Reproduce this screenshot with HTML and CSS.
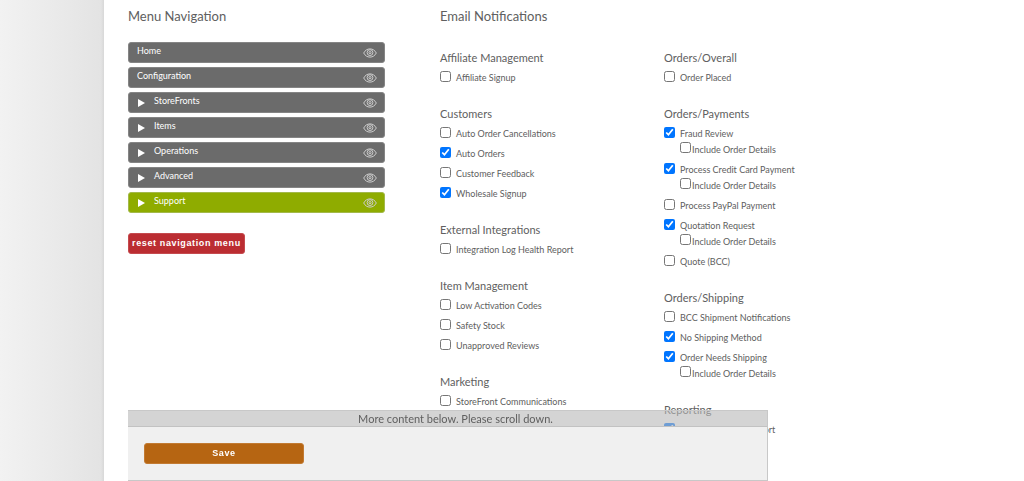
FILE: index.html
```html
<!DOCTYPE html>
<html lang="en">
<head>
<meta charset="utf-8">
<title>Email Notifications</title>
<link rel="stylesheet" href="styles.css">
</head>
<body>
<svg class="sprite" aria-hidden="true">
  <symbol id="eye" viewBox="0 0 14 10">
    <path d="M.7 5C2.2 2.2 4.3.9 7 .9S11.800 2.200 13.300 5C11.800 7.800 9.700 9.100 7 9.100S2.200 7.800.7 5Z"/>
    <circle cx="7" cy="4.600" r="2.900"/>
    <circle cx="7" cy="4.600" r="1.100"/>
  </symbol>
</svg>
<div class="page">
  <aside class="rail"></aside>
  <main class="content">
    <section class="menu">
      <h2 class="title">Menu Navigation</h2>
      <ul class="menu-list">
        <li class="item"><a class="link" href="#">Home</a><button class="eye" aria-label="Toggle Home"><svg><use href="#eye"/></svg></button></li>
        <li class="item"><a class="link" href="#">Configuration</a><button class="eye" aria-label="Toggle Configuration"><svg><use href="#eye"/></svg></button></li>
        <li class="item"><i class="arrow"></i><a class="link" href="#">StoreFronts</a><button class="eye" aria-label="Toggle StoreFronts"><svg><use href="#eye"/></svg></button></li>
        <li class="item"><i class="arrow"></i><a class="link" href="#">Items</a><button class="eye" aria-label="Toggle Items"><svg><use href="#eye"/></svg></button></li>
        <li class="item"><i class="arrow"></i><a class="link" href="#">Operations</a><button class="eye" aria-label="Toggle Operations"><svg><use href="#eye"/></svg></button></li>
        <li class="item"><i class="arrow"></i><a class="link" href="#">Advanced</a><button class="eye" aria-label="Toggle Advanced"><svg><use href="#eye"/></svg></button></li>
        <li class="item active"><i class="arrow"></i><a class="link" href="#">Support</a><button class="eye" aria-label="Toggle Support"><svg><use href="#eye"/></svg></button></li>
      </ul>
      <button class="btn reset">reset navigation menu</button>
    </section>
    <section class="notifications">
      <h2 class="title">Email Notifications</h2>
      <div class="columns">
        <div class="column">
          <div class="group">
            <h3 class="heading">Affiliate Management</h3>
            <label class="row"><input type="checkbox">Affiliate Signup</label>
          </div>
          <div class="group">
            <h3 class="heading">Customers</h3>
            <label class="row"><input type="checkbox">Auto Order Cancellations</label>
            <label class="row"><input type="checkbox" checked>Auto Orders</label>
            <label class="row"><input type="checkbox">Customer Feedback</label>
            <label class="row"><input type="checkbox" checked>Wholesale Signup</label>
          </div>
          <div class="group">
            <h3 class="heading">External Integrations</h3>
            <label class="row"><input type="checkbox">Integration Log Health Report</label>
          </div>
          <div class="group">
            <h3 class="heading">Item Management</h3>
            <label class="row"><input type="checkbox">Low Activation Codes</label>
            <label class="row"><input type="checkbox">Safety Stock</label>
            <label class="row"><input type="checkbox">Unapproved Reviews</label>
          </div>
          <div class="group">
            <h3 class="heading">Marketing</h3>
            <label class="row"><input type="checkbox">StoreFront Communications</label>
          </div>
        </div>
        <div class="column">
          <div class="group">
            <h3 class="heading">Orders/Overall</h3>
            <label class="row"><input type="checkbox">Order Placed</label>
          </div>
          <div class="group">
            <h3 class="heading">Orders/Payments</h3>
            <label class="row"><input type="checkbox" checked>Fraud Review</label>
            <label class="row sub"><input type="checkbox">Include Order Details</label>
            <label class="row"><input type="checkbox" checked>Process Credit Card Payment</label>
            <label class="row sub"><input type="checkbox">Include Order Details</label>
            <label class="row"><input type="checkbox">Process PayPal Payment</label>
            <label class="row"><input type="checkbox" checked>Quotation Request</label>
            <label class="row sub"><input type="checkbox">Include Order Details</label>
            <label class="row"><input type="checkbox">Quote (BCC)</label>
          </div>
          <div class="group">
            <h3 class="heading">Orders/Shipping</h3>
            <label class="row"><input type="checkbox">BCC Shipment Notifications</label>
            <label class="row"><input type="checkbox" checked>No Shipping Method</label>
            <label class="row"><input type="checkbox" checked>Order Needs Shipping</label>
            <label class="row sub"><input type="checkbox">Include Order Details</label>
          </div>
          <div class="group">
            <h3 class="heading">Reporting</h3>
            <label class="row"><input type="checkbox" checked>Orders Summary Report</label>
          </div>
        </div>
      </div>
    </section>
  </main>
</div>
<div class="savebar">
  <p class="more">More content below. Please scroll down.</p>
  <div class="actions"><button class="btn save">Save</button></div>
</div>
</body>
</html>
```
FILE: styles.css
```css
* { box-sizing: border-box; }
body { margin: 0; background: #fff; color: #606060; font-family: Lato, "Open Sans", sans-serif; font-size: 9px; }
h2, h3, p, ul { margin: 0; padding: 0; font-weight: 400; }
.sprite { display: none; }
.page { display: flex; min-height: 100vh; }
.rail { flex: none; width: 104px; background: linear-gradient(to right, transparent 101px, #d8d8d8), linear-gradient(to right, #f2f2f2, #e3e3e3); }
.content { flex: 1; display: flex; gap: 55px; padding: 6px 24px 0; }
.menu { flex: none; width: 257px; }
.title { font-size: 13px; line-height: 21px; }
.menu-list { display: grid; gap: 4px; margin-top: 15px; list-style: none; }
.item { display: flex; height: 21px; padding: 0 7px 0 8px; background: #6b6b6b; border: 1px solid #858585; border-radius: 3px; }
.active { background: #8fac00; border-color: #a3b94a; }
.arrow { width: 7px; height: 8px; margin: 6px 9px 0 1px; background: #fff; clip-path: polygon(0 0, 100% 50%, 0 100%); }
.link { flex: 1; color: #fff; line-height: 16px; text-decoration: none; }
.eye { width: 14px; height: 10px; margin-top: 5px; padding: 0; border: 0; background: none; }
.eye svg { display: block; width: 14px; height: 10px; fill: none; stroke: #ccc; }
.btn { padding: 0 3px; border-radius: 3px; color: #fff; font-family: "Liberation Sans", Arial, sans-serif; font-weight: 700; font-size: 9px; line-height: 19px; letter-spacing: .07em; text-align: center; }
.reset { margin-top: 20px; background: #bb2d32; border: 1px solid #c54a4e; }
.notifications { flex: 1; }
.columns { display: flex; margin-top: 21px; }
.column { flex: none; width: 224px; }
.group { margin-bottom: 16px; }
.heading { font-size: 11px; line-height: 20px; }
.row { display: flex; gap: 5px; height: 20px; line-height: 19px; white-space: nowrap; }
.row input { width: 11px; height: 11px; margin: 3px 0 0; accent-color: #0075ff; }
.sub { height: 16px; padding-left: 16px; gap: 1px; line-height: 11px; }
.sub input { margin-top: -2px; }
.savebar { position: fixed; left: 128px; bottom: 0; width: 640px; border: 1px solid #c8c8c8; border-left: 0; }
.more { padding-left: 16px; background: rgba(184, 184, 184, .6); font-size: 11px; line-height: 15px; text-align: center; }
.actions { padding: 16px; background: #f0f0f0; border-top: 1px solid #c2c2c2; }
.save { display: block; width: 160px; background: #b66512; border: 1px solid #c27a32; }
```
